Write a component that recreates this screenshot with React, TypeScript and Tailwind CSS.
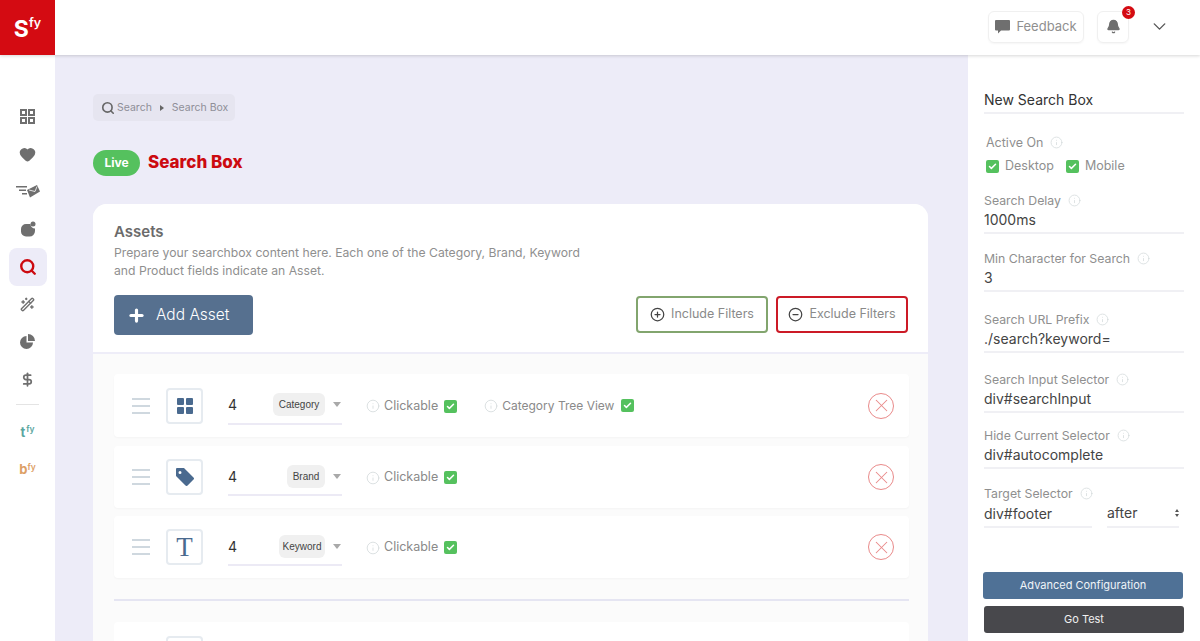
import React from "react";
import { Search, WandSparkles, Bell, ChevronDown, Heart, DollarSign, Plus, CirclePlus, CircleMinus, X, Check, Info } from "lucide-react";

const font = { fontFamily: "Inter, 'Open Sans', sans-serif" };

function Tick() {
  return (
    <span className="flex h-[13px] w-[13px] items-center justify-center rounded-[2px] bg-[#55c15e]">
      <Check size={9} strokeWidth={4} className="text-white" />
    </span>
  );
}

function Hint({ size = 14 }: { size?: number }) {
  return <Info size={size} strokeWidth={1.4} className="shrink-0 text-[#d4dadb]" />;
}

function Row({ icon, label, tree, chipWidth, tall }: { icon: React.ReactNode; label: string; tree?: boolean; chipWidth: string; tall?: boolean }) {
  return (
    <div className={`flex ${tall ? "h-[63px]" : "h-[62px]"} items-center rounded-[4px] bg-white pl-[18px] pr-[15px] shadow-[0_1px_2px_rgba(0,0,0,0.03)]`}>
      <div className="flex w-[18px] flex-col gap-[5px]">
        <span className="h-[2px] bg-[#cfd8df]" />
        <span className="h-[2px] bg-[#cfd8df]" />
        <span className="h-[2px] bg-[#cfd8df]" />
      </div>
      <div className="ml-[16px] flex h-[36px] w-[37px] items-center justify-center rounded-[4px] border-2 border-[#e6ebf0] text-[#4a6a8f]">{icon}</div>
      <div className="ml-[25px] flex h-[38px] w-[114px] items-center border-b-2 border-[#eceaf5]">
        <span className="text-[14px] text-[#333]">4</span>
        <span className={`ml-auto flex h-[23px] ${chipWidth} items-center justify-center rounded-[6px] bg-[#f0f0f0] text-[10px] text-[#444]`} style={{ fontFamily: "'Liberation Sans', sans-serif" }}>{label}</span>
        <span className="ml-[8px] mr-[1px] h-0 w-0 border-x-[4px] border-t-[5px] border-x-transparent border-t-[#a9a9a9]" />
      </div>
      <div className="mb-[-1px] ml-[24px] flex items-center">
        <Hint />
        <span className="ml-[4px] text-[12.500px] text-[#8a8a8a]">Clickable</span>
        <span className="ml-[6px]"><Tick /></span>
      </div>
      {tree && (
        <div className="ml-[27px] flex items-center">
          <Hint />
          <span className="ml-[4px] text-[12px] text-[#8a8a8a]">Category Tree View</span>
          <span className="ml-[7px]"><Tick /></span>
        </div>
      )}
      <div className="ml-auto flex h-[26px] w-[26px] items-center justify-center rounded-full border-[1.5px] border-[#e98a8a] text-[#e98a8a]">
        <X size={21} strokeWidth={1.2} />
      </div>
    </div>
  );
}

function Field({ label, value, cls }: { label: string; value: string; cls: string }) {
  return (
    <div className={cls}>
      <div className="flex items-center gap-[7px] text-[12.300px] leading-[15px] text-[#8f8f8f]">
        {label}
        <Hint size={13} />
      </div>
      <div className="mt-[2px] h-[24px] border-b-2 border-[#f0f0f4] text-[14px] leading-[20px] text-[#444]">{value}</div>
    </div>
  );
}

function NavItem({ children }: { children: React.ReactNode }) {
  return <div className="flex h-[37.500px] w-[38px] items-center justify-center text-[#6f6f6f]">{children}</div>;
}

export default function App() {
  return (
    <div className="flex h-[641px] w-[1200px] flex-col overflow-hidden bg-[#edecf8]" style={font}>
      <header className="relative z-10 flex h-[55px] shrink-0 items-center bg-white shadow-[0_1px_3px_rgba(0,0,0,0.16)]">
        <div className="flex h-[55px] w-[55px] items-center justify-center bg-[#d40b12] text-white">
          <span className="mt-[4px] text-[23px] font-bold leading-none">S</span>
          <span className="mb-[8px] text-[12.500px] font-semibold leading-none">fy</span>
        </div>
        <div className="mb-[2px] ml-auto flex items-center">
          <div className="flex h-[32px] w-[96px] items-center justify-center gap-[6px] rounded-[6px] border border-[#f0f0f0] text-[13px] text-[#8f8f8f] shadow-[0_1px_2px_rgba(0,0,0,0.04)]">
            <svg width="15" height="14" viewBox="0 0 15 14" fill="#6f6f6f">
              <path d="M1 0h13a1 1 0 0 1 1 1v8.500a1 1 0 0 1-1 1H6l-3 3v-3H1a1 1 0 0 1-1-1V1a1 1 0 0 1 1-1z" />
            </svg>
            Feedback
          </div>
          <div className="relative ml-[13px] flex h-[32px] w-[32px] items-center justify-center rounded-[6px] border border-[#f0f0f0] shadow-[0_1px_2px_rgba(0,0,0,0.04)]">
            <Bell size={15} fill="#6f6f6f" className="text-[#6f6f6f]" />
            <span className="absolute left-[24px] top-[-6px] flex h-[13px] w-[13px] items-center justify-center rounded-full bg-[#d40b12] text-[8px] text-white">3</span>
          </div>
          <ChevronDown size={21} strokeWidth={1.6} className="ml-[20px] mr-[30px] text-[#555]" />
        </div>
      </header>

      <div className="flex min-h-0 flex-1">
        <aside className="flex w-[55px] shrink-0 flex-col items-center bg-white pt-[43px]">
          <NavItem>
            <svg width="15" height="15" viewBox="0 0 15 15" fill="none" stroke="#6f6f6f" strokeWidth="2">
              <rect x="1" y="1" width="5" height="5" />
              <rect x="9" y="1" width="5" height="5" />
              <rect x="1" y="9" width="5" height="5" />
              <rect x="9" y="9" width="5" height="5" />
            </svg>
          </NavItem>
          <NavItem><Heart size={17} fill="#6f6f6f" /></NavItem>
          <NavItem>
            <svg width="24" height="15" viewBox="0 0 24 15" fill="#6f6f6f">
              <path d="M0 2h11v1.400H0zM3 5.500h7v1.400H3zM6 9h5v1.400H6z" />
              <path d="M11 6l10-5 3 6.500-10 6z" />
              <path d="M13 6l6 1.500 2-5" fill="none" stroke="#fff" strokeWidth="0.8" />
            </svg>
          </NavItem>
          <NavItem>
            <svg width="16" height="16" viewBox="0 0 16 16" fill="#6f6f6f">
              <path d="M6 3h4.500A4.500 4.500 0 0 0 15 7.500V10a5.500 5.500 0 0 1-5.500 5.500H6A5 5 0 0 1 1 10.500V8a5 5 0 0 1 5-5z" />
              <circle cx="13" cy="3" r="2.500" />
            </svg>
          </NavItem>
          <div className="flex h-[37.500px] w-[38px] items-center justify-center rounded-[8px] bg-[#edecf8] text-[#cc0a10]">
            <Search size={18} strokeWidth={3.2} />
          </div>
          <NavItem><WandSparkles size={15} strokeWidth={2.2} /></NavItem>
          <NavItem>
            <svg width="15" height="15" viewBox="0 0 15 15" fill="#6f6f6f">
              <path d="M6.500 2a6.500 6.500 0 1 0 6.500 6.500H6.500z" />
              <path d="M8 0a7 7 0 0 1 7 7H8z" />
            </svg>
          </NavItem>
          <NavItem><DollarSign size={15} strokeWidth={2.8} /></NavItem>
          <div className="mt-[6px] h-px w-[23px] bg-[#e4e4e4]" />
          <div className="mt-[8px] flex h-[38px] items-center text-[#5aa6a0]">
            <span className="mt-[2px] text-[13px] font-bold">t</span><span className="mb-[6px] ml-[1px] text-[8.500px] font-semibold">fy</span>
          </div>
          <div className="flex h-[38px] items-center text-[#dda066]">
            <span className="text-[13px] font-bold">b</span><span className="mb-[6px] text-[8.500px] font-semibold">fy</span>
          </div>
        </aside>

        <main className="min-w-0 flex-1 overflow-hidden pl-[38px] pr-[40px] pt-[39px]">
          <div className="flex h-[27px] w-[142px] items-center rounded-[5px] bg-[#e6e5f0] pl-[8px] text-[10.500px] text-[#8f8f98]">
            <Search size={14} strokeWidth={2.8} className="text-[#666]" />
            <span className="ml-[2px]">Search</span>
            <span className="mx-[8px] h-0 w-0 border-y-[3.500px] border-l-[4px] border-y-transparent border-l-[#666]" />
            <span>Search Box</span>
          </div>
          <div className="mt-[29px] flex items-center">
            <span className="flex h-[26px] w-[47px] items-center justify-center rounded-full bg-[#55c15e] text-[12px] font-bold text-white">Live</span>
            <span className="ml-[8px] text-[17px] font-extrabold text-[#cc0a10]">Search Box</span>
          </div>
          <section className="mt-[28px] overflow-hidden rounded-t-[14px] bg-[#fbfbfb]">
            <div className="h-[150px] border-b-2 border-[#eeedf8] bg-white pl-[21px] pr-[20px] pt-[18px]">
              <h2 className="text-[15px] font-semibold leading-[20px] text-[#6b6b6b]">Assets</h2>
              <p className="mt-[2px] w-[490px] text-[12.200px] leading-[18px] text-[#8f8f8f]">
                Prepare your searchbox content here. Each one of the Category, Brand, Keyword and Product fields indicate an Asset.
              </p>
              <div className="mt-[15px] flex items-start">
                <button className="flex h-[40px] w-[139px] items-center rounded-[4px] bg-[#56708f] pl-[13px] text-[15.500px] font-light text-white">
                  <Plus size={19} strokeWidth={4} />
                  <span className="ml-[10px]">Add Asset</span>
                </button>
                <div className="ml-auto mt-[1px] flex gap-[8px]">
                  <button className="flex h-[37px] w-[132px] items-center justify-center gap-[6px] rounded-[4px] border-2 border-[#82a56e] text-[12.500px] text-[#8a8a8a]">
                    <CirclePlus size={15} className="text-[#444]" />Include Filters
                  </button>
                  <button className="flex h-[37px] w-[132px] items-center justify-center gap-[6px] rounded-[4px] border-2 border-[#cc1a26] text-[12.500px] text-[#8a8a8a]">
                    <CircleMinus size={15} className="text-[#444]" />Exclude Filters
                  </button>
                </div>
              </div>
            </div>
            <div className="flex flex-col pl-[21px] pr-[19px] pt-[20px]">
              <Row tall icon={
                <svg width="16" height="16" viewBox="0 0 16 16" fill="#4a6a8f">
                  <rect x="0" y="0" width="7" height="7" rx="1" />
                  <rect x="9" y="0" width="7" height="7" rx="1" />
                  <rect x="0" y="9" width="7" height="7" rx="1" />
                  <rect x="9" y="9" width="7" height="7" rx="1" />
                </svg>
              } label="Category" tree chipWidth="w-[52px]" />
              <div className="h-[9px]" />
              <Row icon={
                <svg width="18" height="18" viewBox="0 0 18 18" fill="#4a6a8f">
                  <path fillRule="evenodd" d="M1 0h7l9.500 9.500a1.500 1.500 0 0 1 0 2.100l-5.900 5.900a1.500 1.500 0 0 1-2.100 0L0 8V1a1 1 0 0 1 1-1zm3 3a1.500 1.500 0 1 0 0 3 1.500 1.500 0 0 0 0-3z" />
                </svg>
              } label="Brand" chipWidth="w-[38px]" />
              <div className="h-[8px]" />
              <Row icon={<span className="text-[27px] leading-none" style={{ fontFamily: "'Liberation Serif', serif" }}>T</span>} label="Keyword" chipWidth="w-[46px]" />
              <div className="mt-[21px] h-[2px] bg-[#e5e5f2]" />
              <div className="mt-[21px] flex h-[63px] rounded-[4px] bg-white pl-[52px] pt-[14px]">
                <div className="h-[36px] w-[37px] rounded-[4px] border-2 border-[#e6ebf0]" />
              </div>
            </div>
          </section>
        </main>

        <aside className="flex w-[232px] shrink-0 flex-col bg-white px-[16px] pt-[35px]">
          <div className="h-[24px] border-b-2 border-[#f0f0f4] text-[14px] leading-[20px] text-[#333]">New Search Box</div>
          <div className="mt-[21px] flex items-center gap-[7px] pl-[2px] text-[12.500px] leading-[15px] text-[#8f8f8f]">Active On <Hint size={13} /></div>
          <div className="mt-[8px] flex items-center pl-[2px] text-[12.500px] leading-[16px] text-[#8f8f8f]">
            <Tick /><span className="ml-[6px]">Desktop</span>
            <span className="ml-[12px]"><Tick /></span><span className="ml-[6px]">Mobile</span>
          </div>
          <Field cls="mt-[19px]" label="Search Delay" value="1000ms" />
          <Field cls="mt-[17px]" label="Min Character for Search" value="3" />
          <Field cls="mt-[20px]" label="Search URL Prefix" value="./search?keyword=" />
          <Field cls="mt-[19px]" label="Search Input Selector" value="div#searchInput" />
          <Field cls="mt-[15px]" label="Hide Current Selector" value="div#autocomplete" />
          <div className="mt-[17px] flex items-center gap-[7px] text-[12.300px] leading-[15px] text-[#8f8f8f]">Target Selector <Hint size={13} /></div>
          <div className="mt-[3px] flex gap-[15px] text-[14px] leading-[20px] text-[#444]">
            <div className="h-[24px] w-[108px] border-b-2 border-[#f0f0f4]">div#footer</div>
            <div className="flex h-[24px] w-[72px] items-center justify-between border-b-2 border-[#f0f0f4] pb-[4px]">
              after
              <span className="flex flex-col gap-[2px]">
                <span className="h-0 w-0 border-x-[2px] border-b-[3px] border-x-transparent border-b-[#555]" />
                <span className="h-0 w-0 border-x-[2px] border-t-[3px] border-x-transparent border-t-[#555]" />
              </span>
            </div>
          </div>
          <button className="-ml-[1px] mt-[44px] h-[27px] w-[200px] rounded-[3px] bg-[#4f7196] text-[11px] text-[#f0f4f8]">Advanced Configuration</button>
          <button className="mt-[7px] h-[27px] w-[200px] rounded-[3px] bg-[#48484c] text-[11px] text-[#f0f0f0]">Go Test</button>
        </aside>
      </div>
    </div>
  );
}
